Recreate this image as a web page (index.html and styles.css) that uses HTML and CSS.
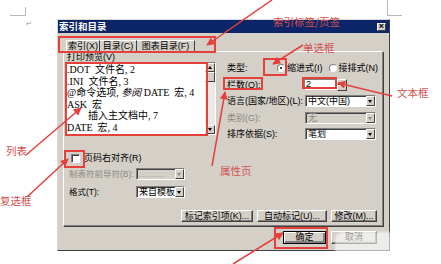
FILE: index.html
```html
<!DOCTYPE html>
<html lang="zh-CN">
<head>
    <meta charset="UTF-8">
    <meta name="viewport" content="width=device-width, initial-scale=1.0">
    <title>索引和目录</title>
    <link rel="stylesheet" href="styles.css">
</head>
<body>

    <div class="dialog">
        <div class="titlebar">
            <span>索引和目录</span>
            <span class="close">×</span>
        </div>

        <div class="tabs">
            <div class="tab tab-index">索引(X)</div>
            <div class="tab tab-toc">目录(C)</div>
            <div class="tab tab-fig">图表目录(F)</div>
        </div>

        <div class="panel">
            <div class="cols">
                <div class="col-left">
                    <div class="preview-label">打印预览(V)</div>
                    <div class="listbox">
                        <div class="list-text">
                            <div>.DOT&nbsp; 文件名, 2</div>
                            <div>.INI&nbsp; 文件名, 3</div>
                            <div>@命令选项, <i>参阅</i> DATE&nbsp; 宏, 4</div>
                            <div>ASK&nbsp; 宏</div>
                            <div class="indent">插入主文档中, 7</div>
                            <div>DATE&nbsp; 宏, 4</div>
                        </div>
                        <div class="scrollbar">
                            <span class="sb-btn up"></span>
                            <span class="sb-thumb"></span>
                            <span class="sb-track"></span>
                            <span class="sb-btn down"></span>
                        </div>
                    </div>

                    <div class="check-row">
                        <span class="checkbox"></span>
                        <span>页码右对齐(R)</span>
                    </div>
                    <div class="field-row disabled">
                        <span class="flabel">制表符前导符(B):</span>
                        <span class="combo combo-small dotted"><span class="combo-val">.........</span><span class="drop"></span></span>
                    </div>
                    <div class="field-row">
                        <span class="flabel">格式(T):</span>
                        <span class="combo combo-small"><span class="combo-val">来自模板</span><span class="drop"></span></span>
                    </div>
                </div>

                <div class="col-right">
                    <div class="rrow">
                        <span class="rlabel short">类型:</span>
                        <span class="radio"><span class="dot on"></span>缩进式(I)</span>
                        <span class="radio"><span class="dot"></span>接排式(N)</span>
                    </div>
                    <div class="rrow">
                        <span class="rlabel">栏数(O):</span>
                        <span class="textbox">2</span>
                        <span class="spin"><span class="spin-up"></span><span class="spin-down"></span></span>
                    </div>
                    <div class="rrow">
                        <span class="rlabel">语言(国家/地区)(L):</span>
                        <span class="combo"><span class="combo-val">中文(中国)</span><span class="drop"></span></span>
                    </div>
                    <div class="rrow disabled">
                        <span class="rlabel">类别(G):</span>
                        <span class="combo grey"><span class="combo-val">无</span><span class="drop"></span></span>
                    </div>
                    <div class="rrow">
                        <span class="rlabel">排序依据(S):</span>
                        <span class="combo"><span class="combo-val">笔划</span><span class="drop"></span></span>
                    </div>
                </div>
            </div>

            <div class="buttons">
                <button class="btn btn-mark">标记索引项(K)...</button>
                <button class="btn btn-auto">自动标记(U)...</button>
                <button class="btn btn-edit">修改(M)...</button>
            </div>
        </div>

        <div class="footer">
            <button class="btn btn-ok">确定</button>
            <button class="btn btn-cancel">取消</button>
        </div>
    </div>

    <div class="blob"></div>

    <svg class="overlay" width="441" height="264" viewBox="0 0 441 264">
        <defs>
            <marker id="head" viewBox="0 0 10 10" refX="9" refY="5" markerWidth="9" markerHeight="8" orient="auto" markerUnits="userSpaceOnUse">
                <path d="M0 0 L10 5 L0 10 z" fill="#e5403c"/>
            </marker>
        </defs>
        <g fill="none" stroke="#b8b8b8" stroke-width="1">
            <path d="M10 15.5H25.5V7"/>
            <path d="M387.5 0V15.5H402"/>
        </g>
        <text x="26" y="26" font-size="7" fill="#999">↵</text>
        <g fill="none" stroke="#e5403c" stroke-width="2">
            <rect x="59" y="37" width="156" height="15"/>
            <rect x="66" y="63" width="141" height="72"/>
            <rect x="264" y="59" width="22" height="16"/>
            <rect x="224" y="78" width="38" height="11"/>
            <rect x="303" y="78" width="33" height="10"/>
            <rect x="65" y="151" width="19" height="16"/>
            <rect x="275" y="228" width="52" height="20"/>
        </g>
        <g stroke="#e5403c" stroke-width="1.5" marker-end="url(#head)">
            <line x1="272" y1="0" x2="207" y2="45"/>
            <line x1="303" y1="45" x2="273" y2="64"/>
            <line x1="392" y1="96" x2="338" y2="83"/>
            <line x1="26" y1="155" x2="81" y2="108"/>
            <line x1="212" y1="166" x2="225" y2="92"/>
            <line x1="27" y1="197" x2="68" y2="159"/>
            <line x1="233" y1="264" x2="283" y2="233"/>
        </g>
    </svg>

    <div class="note note-tabs">索引标签/页签</div>
    <div class="note note-radio">单选框</div>
    <div class="note note-text">文本框</div>
    <div class="note note-list">列表</div>
    <div class="note note-page">属性页</div>
    <div class="note note-check">复选框</div>

</body>
</html>
```

FILE: styles.css
```css
*{
    margin: 0;
    padding: 0;
    box-sizing: border-box;
}
body{
    width: 441px;
    height: 264px;
    overflow: hidden;
    position: relative;
    background: #fff;
    font-family: "Liberation Sans", "Noto Sans CJK SC", sans-serif;
}

/* dialog window */
.dialog{
    width: 333px;
    height: 232px;
    margin: 19px 0 0 57px;
    background: #d4d0c8;
    border: 1px solid;
    border-color: #dcd9d2 #404040 #404040 #dcd9d2;
    font-size: 9px;
    line-height: 10px;
    color: #000;
    white-space: nowrap;
}
.titlebar{
    height: 13px;
    background: #0c2468;
    color: #fff;
    display: flex;
    align-items: center;
    justify-content: space-between;
    padding: 0 3px 0 1px;
    font-weight: bold;
    font-size: 9.5px;
}
.close{
    width: 9px;
    height: 8px;
    background: #d4d0c8;
    color: #000;
    border: 1px solid;
    border-color: #fff #404040 #404040 #fff;
    font-size: 9px;
    line-height: 5px;
    text-align: center;
}

/* tabs */
.tabs{
    display: flex;
    height: 11px;
    margin: 7px 0 0 8px;
}
.tab{
    border-top: 1px solid #fff;
    border-right: 1px solid #404040;
    line-height: 10px;
    text-align: center;
}
.tab-index{
    width: 34px;
    border-left: 1px solid #fff;
}
.tab-toc{
    width: 37px;
}
.tab-fig{
    width: 58px;
}

.panel{
    width: 320px;
    height: 175px;
    margin-left: 5px;
    border: 1px solid;
    border-color: #fff #808080 #808080 #fff;
    box-shadow: 1px 1px 0 #404040;
    display: flex;
    flex-direction: column;
}
.cols{
    display: flex;
    gap: 9px;
    padding-left: 1px;
}

/* left column */
.col-left{
    width: 151px;
    flex-shrink: 0;
    display: flex;
    flex-direction: column;
}
.preview-label{
    height: 10px;
    padding-left: 2px;
}
.listbox{
    height: 73px;
    display: flex;
    background: #fff;
    border: 1px solid;
    border-color: #808080 #fff #fff #808080;
}
.list-text{
    flex: 1;
    padding: 1px 0 0 1px;
    font-family: "Liberation Serif", "Noto Sans CJK SC", serif;
    font-size: 10px;
    line-height: 11.6px;
    overflow: hidden;
}
.list-text .indent{
    padding-left: 21px;
}
.scrollbar{
    width: 10px;
    display: flex;
    flex-direction: column;
    background: #ebe9e5;
}
.sb-btn,
.sb-thumb{
    display: block;
    background: #d4d0c8;
    border: 1px solid;
    border-color: #fff #404040 #404040 #fff;
    position: relative;
}
.sb-btn{
    height: 9px;
}
.sb-thumb{
    height: 10px;
}
.sb-track{
    flex: 1;
}
.sb-btn:after{
    content: "";
    position: absolute;
    left: 2px;
    top: 2px;
    border-left: 2px solid transparent;
    border-right: 2px solid transparent;
}
.sb-btn.up:after{
    border-bottom: 3px solid #000;
}
.sb-btn.down:after{
    border-top: 3px solid #000;
}

.check-row{
    display: flex;
    align-items: center;
    gap: 4px;
    height: 10px;
    margin-top: 18px;
    padding-left: 6px;
}
.checkbox{
    width: 9px;
    height: 9px;
    background: #fff;
    border: 1px solid;
    border-color: #808080 #fff #fff #808080;
    box-shadow: inset 1px 1px 0 #404040;
}
.field-row{
    display: flex;
    align-items: center;
    height: 12px;
    margin-top: 5px;
    padding-left: 4px;
}
.field-row + .field-row{
    margin-top: 6px;
}
.flabel{
    width: 67px;
    flex-shrink: 0;
    font-size: 8.5px;
}
.disabled{
    color: #8a8782;
}

/* right column */
.col-right{
    width: 154px;
    flex-shrink: 0;
    display: flex;
    flex-direction: column;
    gap: 4.5px;
    padding-top: 10px;
}
.rrow{
    display: flex;
    align-items: center;
    height: 12px;
    padding-left: 2px;
}
.rlabel{
    width: 78px;
    flex-shrink: 0;
}
.rlabel.short{
    width: 50px;
}
.radio{
    display: flex;
    align-items: center;
    flex-shrink: 0;
    gap: 2px;
    margin-right: 6px;
}
.dot{
    width: 8px;
    height: 8px;
    border-radius: 50%;
    background: #fff;
    border: 1px solid;
    border-color: #808080 #fff #fff #808080;
    position: relative;
}
.dot.on:after{
    content: "";
    position: absolute;
    left: 2px;
    top: 2px;
    width: 2px;
    height: 2px;
    border-radius: 50%;
    background: #000;
}
.textbox{
    width: 33px;
    height: 11px;
    margin-left: -1px;
    background: #fff;
    border: 1px solid;
    border-color: #808080 #fff #fff #808080;
    padding-left: 1px;
    line-height: 9px;
}
.spin{
    width: 10px;
    height: 12px;
    display: flex;
    flex-direction: column;
}
.spin-up,
.spin-down{
    flex: 1;
    background: #d4d0c8;
    border: 1px solid;
    border-color: #fff #404040 #404040 #fff;
}

.combo{
    width: 71px;
    height: 12px;
    flex-shrink: 0;
    display: flex;
    background: #fff;
    border: 1px solid;
    border-color: #808080 #fff #fff #808080;
    box-shadow: inset 1px 1px 0 #404040;
}
.combo-small{
    width: 49px;
}
.combo.grey,
.combo.dotted{
    background: #d4d0c8;
}
.combo-val{
    flex: 1;
    padding-left: 2px;
    line-height: 10px;
    overflow: hidden;
}
.dotted .combo-val{
    color: #a09c95;
    letter-spacing: 0.5px;
}
.drop{
    width: 9px;
    background: #d4d0c8;
    border: 1px solid;
    border-color: #fff #404040 #404040 #fff;
    position: relative;
}
.drop:after{
    content: "";
    position: absolute;
    left: 1px;
    top: 3px;
    border-left: 2.5px solid transparent;
    border-right: 2.5px solid transparent;
    border-top: 3px solid #000;
}
.disabled .drop:after,
.dotted .drop:after{
    border-top-color: #8a8782;
}

/* buttons */
.buttons{
    display: flex;
    justify-content: flex-end;
    gap: 4px;
    margin-top: auto;
    margin-bottom: 3px;
    padding-right: 5px;
}
.btn{
    height: 12px;
    background: #d4d0c8;
    border: 1px solid;
    border-color: #fff #404040 #404040 #fff;
    box-shadow: inset -1px -1px 0 #808080;
    font: inherit;
    font-size: 9px;
    line-height: 9px;
    color: #000;
    text-align: center;
}
.btn-mark{
    width: 72px;
}
.btn-auto{
    width: 70px;
}
.btn-edit{
    width: 46px;
}
.footer{
    display: flex;
    justify-content: flex-end;
    gap: 5px;
    padding: 5px 12px 0 0;
}
.btn-ok{
    width: 43px;
    height: 13px;
    border-color: #000;
    box-shadow: inset 1px 1px 0 #fff, inset -2px -2px 0 #808080;
}
.btn-cancel{
    width: 46px;
    height: 13px;
}

/* overlays */
.blob{
    position: absolute;
    left: 335px;
    top: 232px;
    width: 112px;
    height: 40px;
    background: rgba(255, 255, 255, 0.6);
    border-radius: 8px;
    filter: blur(1px);
}
.overlay{
    position: absolute;
    left: 0;
    top: 0;
    pointer-events: none;
}
.note{
    position: absolute;
    font-family: "Noto Sans CJK SC", sans-serif;
    font-size: 10.5px;
    line-height: 12px;
    color: #d2514f;
    white-space: nowrap;
}
.note-tabs{
    left: 273px;
    top: 16px;
}
.note-radio{
    left: 303px;
    top: 42px;
}
.note-text{
    left: 397px;
    top: 87px;
}
.note-list{
    left: 6px;
    top: 145px;
}
.note-page{
    left: 220px;
    top: 165px;
}
.note-check{
    left: 0;
    top: 195px;
}
```
